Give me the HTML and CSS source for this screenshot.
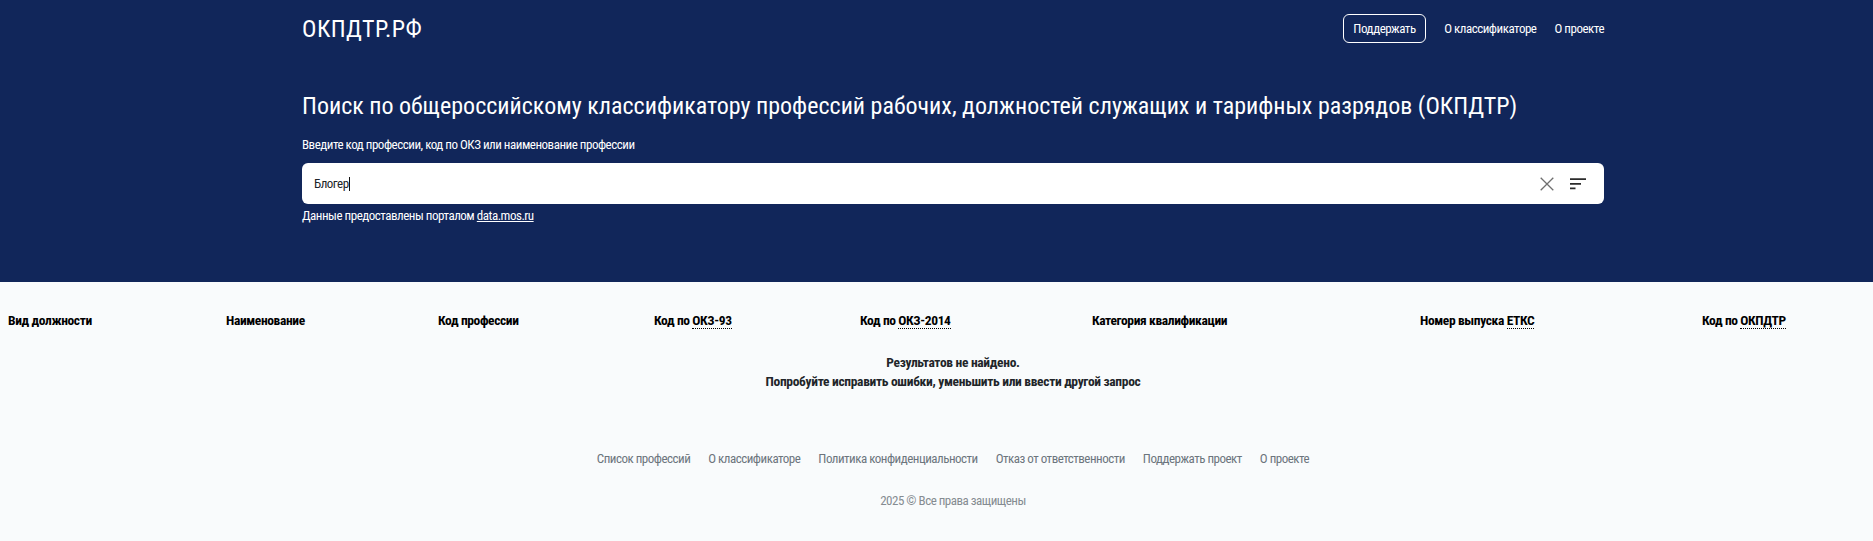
FILE: index.html
```html
<!DOCTYPE html>
<html lang="ru">
<head>
<meta charset="utf-8">
<title>ОКПДТР.РФ</title>
<link rel="stylesheet" href="styles.css">
</head>
<body>
<div class="page">
  <header class="hero">
    <div class="container">
      <nav class="topbar">
        <a class="brand">ОКПДТР.РФ</a>
        <div class="nav">
          <a class="support">Поддержать</a>
          <a>О классификаторе</a>
          <a>О проекте</a>
        </div>
      </nav>
      <h1 class="title">Поиск по общероссийскому классификатору профессий рабочих, должностей служащих и тарифных разрядов (ОКПДТР)</h1>
      <label class="label">Введите код профессии, код по ОКЗ или наименование профессии</label>
      <div class="search">
        <span class="query">Блогер<i class="caret"></i></span>
        <svg class="icon-x" width="16" height="16" viewBox="0 0 16 16"><path d="M1.7 1.7 L14.3 14.3 M14.3 1.7 L1.7 14.3" stroke="#6f6f6f" stroke-width="1.3" fill="none"/></svg>
        <svg class="icon-sort" width="16" height="12" viewBox="0 0 16 12"><path d="M0 1.2h16M0 5.8h11M0 10.4h5.5" stroke="#2b2b2b" stroke-width="1.8" fill="none"/></svg>
      </div>
      <p class="source">Данные предоставлены порталом <a>data.mos.ru</a></p>
    </div>
  </header>
  <main class="results">
    <div class="thead">
      <span>Вид должности</span>
      <span>Наименование</span>
      <span>Код профессии</span>
      <span>Код по <abbr>ОКЗ-93</abbr></span>
      <span>Код по <abbr>ОКЗ-2014</abbr></span>
      <span>Категория квалификации</span>
      <span>Номер выпуска <abbr>ЕТКС</abbr></span>
      <span>Код по <abbr>ОКПДТР</abbr></span>
    </div>
    <div class="empty">
      <p>Результатов не найдено.</p>
      <p>Попробуйте исправить ошибки, уменьшить или ввести другой запрос</p>
    </div>
  </main>
  <footer class="footer">
    <div class="links">
      <a>Список профессий</a>
      <a>О классификаторе</a>
      <a>Политика конфиденциальности</a>
      <a>Отказ от ответственности</a>
      <a>Поддержать проект</a>
      <a>О проекте</a>
    </div>
    <p class="copy">2025 © Все права защищены</p>
  </footer>
</div>
</body>
</html>
```

FILE: styles.css
```css
html, body { margin: 0; padding: 0; overflow: hidden; height: 541px; }
body { background: #f9fbfc; font-family: "Roboto", "Liberation Sans", sans-serif; font-stretch: 75%; color: #212529; }
.page { width: 1906px; }
.hero { background: #11265a; height: 282px; color: #fff; }
.container { width: 1302px; margin: 0 auto; }
.topbar { display: flex; justify-content: space-between; align-items: center; height: 57px; }
.brand { font-size: 24px; line-height: 28px; letter-spacing: 0.45px; }
.nav { display: flex; align-items: center; gap: 18px; font-size: 13px; letter-spacing: -0.48px; }
.support { border: 1px solid #fff; border-radius: 6px; padding: 0 9.5px; line-height: 27px; }
.title { font-size: 24px; font-weight: 450; line-height: 34px; margin: 32px 0 0; }
.label { display: block; font-size: 13px; letter-spacing: -0.48px; line-height: 17px; margin-top: 13px; }
.search { display: flex; align-items: center; background: #fff; border-radius: 6px; height: 41px; margin-top: 10px; padding: 0 18px 0 12px; color: #212529; font-size: 13px; letter-spacing: -0.48px; }
.query { flex: 1; line-height: 15px; margin-top: -1px; }
.caret { display: inline-block; width: 1px; height: 14px; background: #111; vertical-align: -3px; }
.icon-x { margin-right: 15px; }
.source { margin: 3px 0 0; font-size: 13px; letter-spacing: -0.48px; line-height: 17px; }
.source a { text-decoration: underline; }
.thead { display: grid; grid-template-columns: 218px 212px 216px 206px 232px 328px 282px 210px; padding: 30px 0 0 8px; font-size: 13.5px; letter-spacing: -0.38px; font-weight: 700; color: #000; line-height: 17px; }
abbr { border-bottom: 1px dotted #000; }
.empty { text-align: center; font-size: 13.5px; letter-spacing: -0.32px; font-weight: 700; margin-top: 24px; color: #212529; }
.empty p { margin: 0; line-height: 19px; }
.footer { text-align: center; color: #6c757d; font-size: 13px; letter-spacing: -0.5px; margin-top: 59px; }
.links { display: flex; justify-content: center; gap: 18px; line-height: 17px; }
.copy { margin: 25px 0 0; line-height: 17px; color: #858b91; }
```
